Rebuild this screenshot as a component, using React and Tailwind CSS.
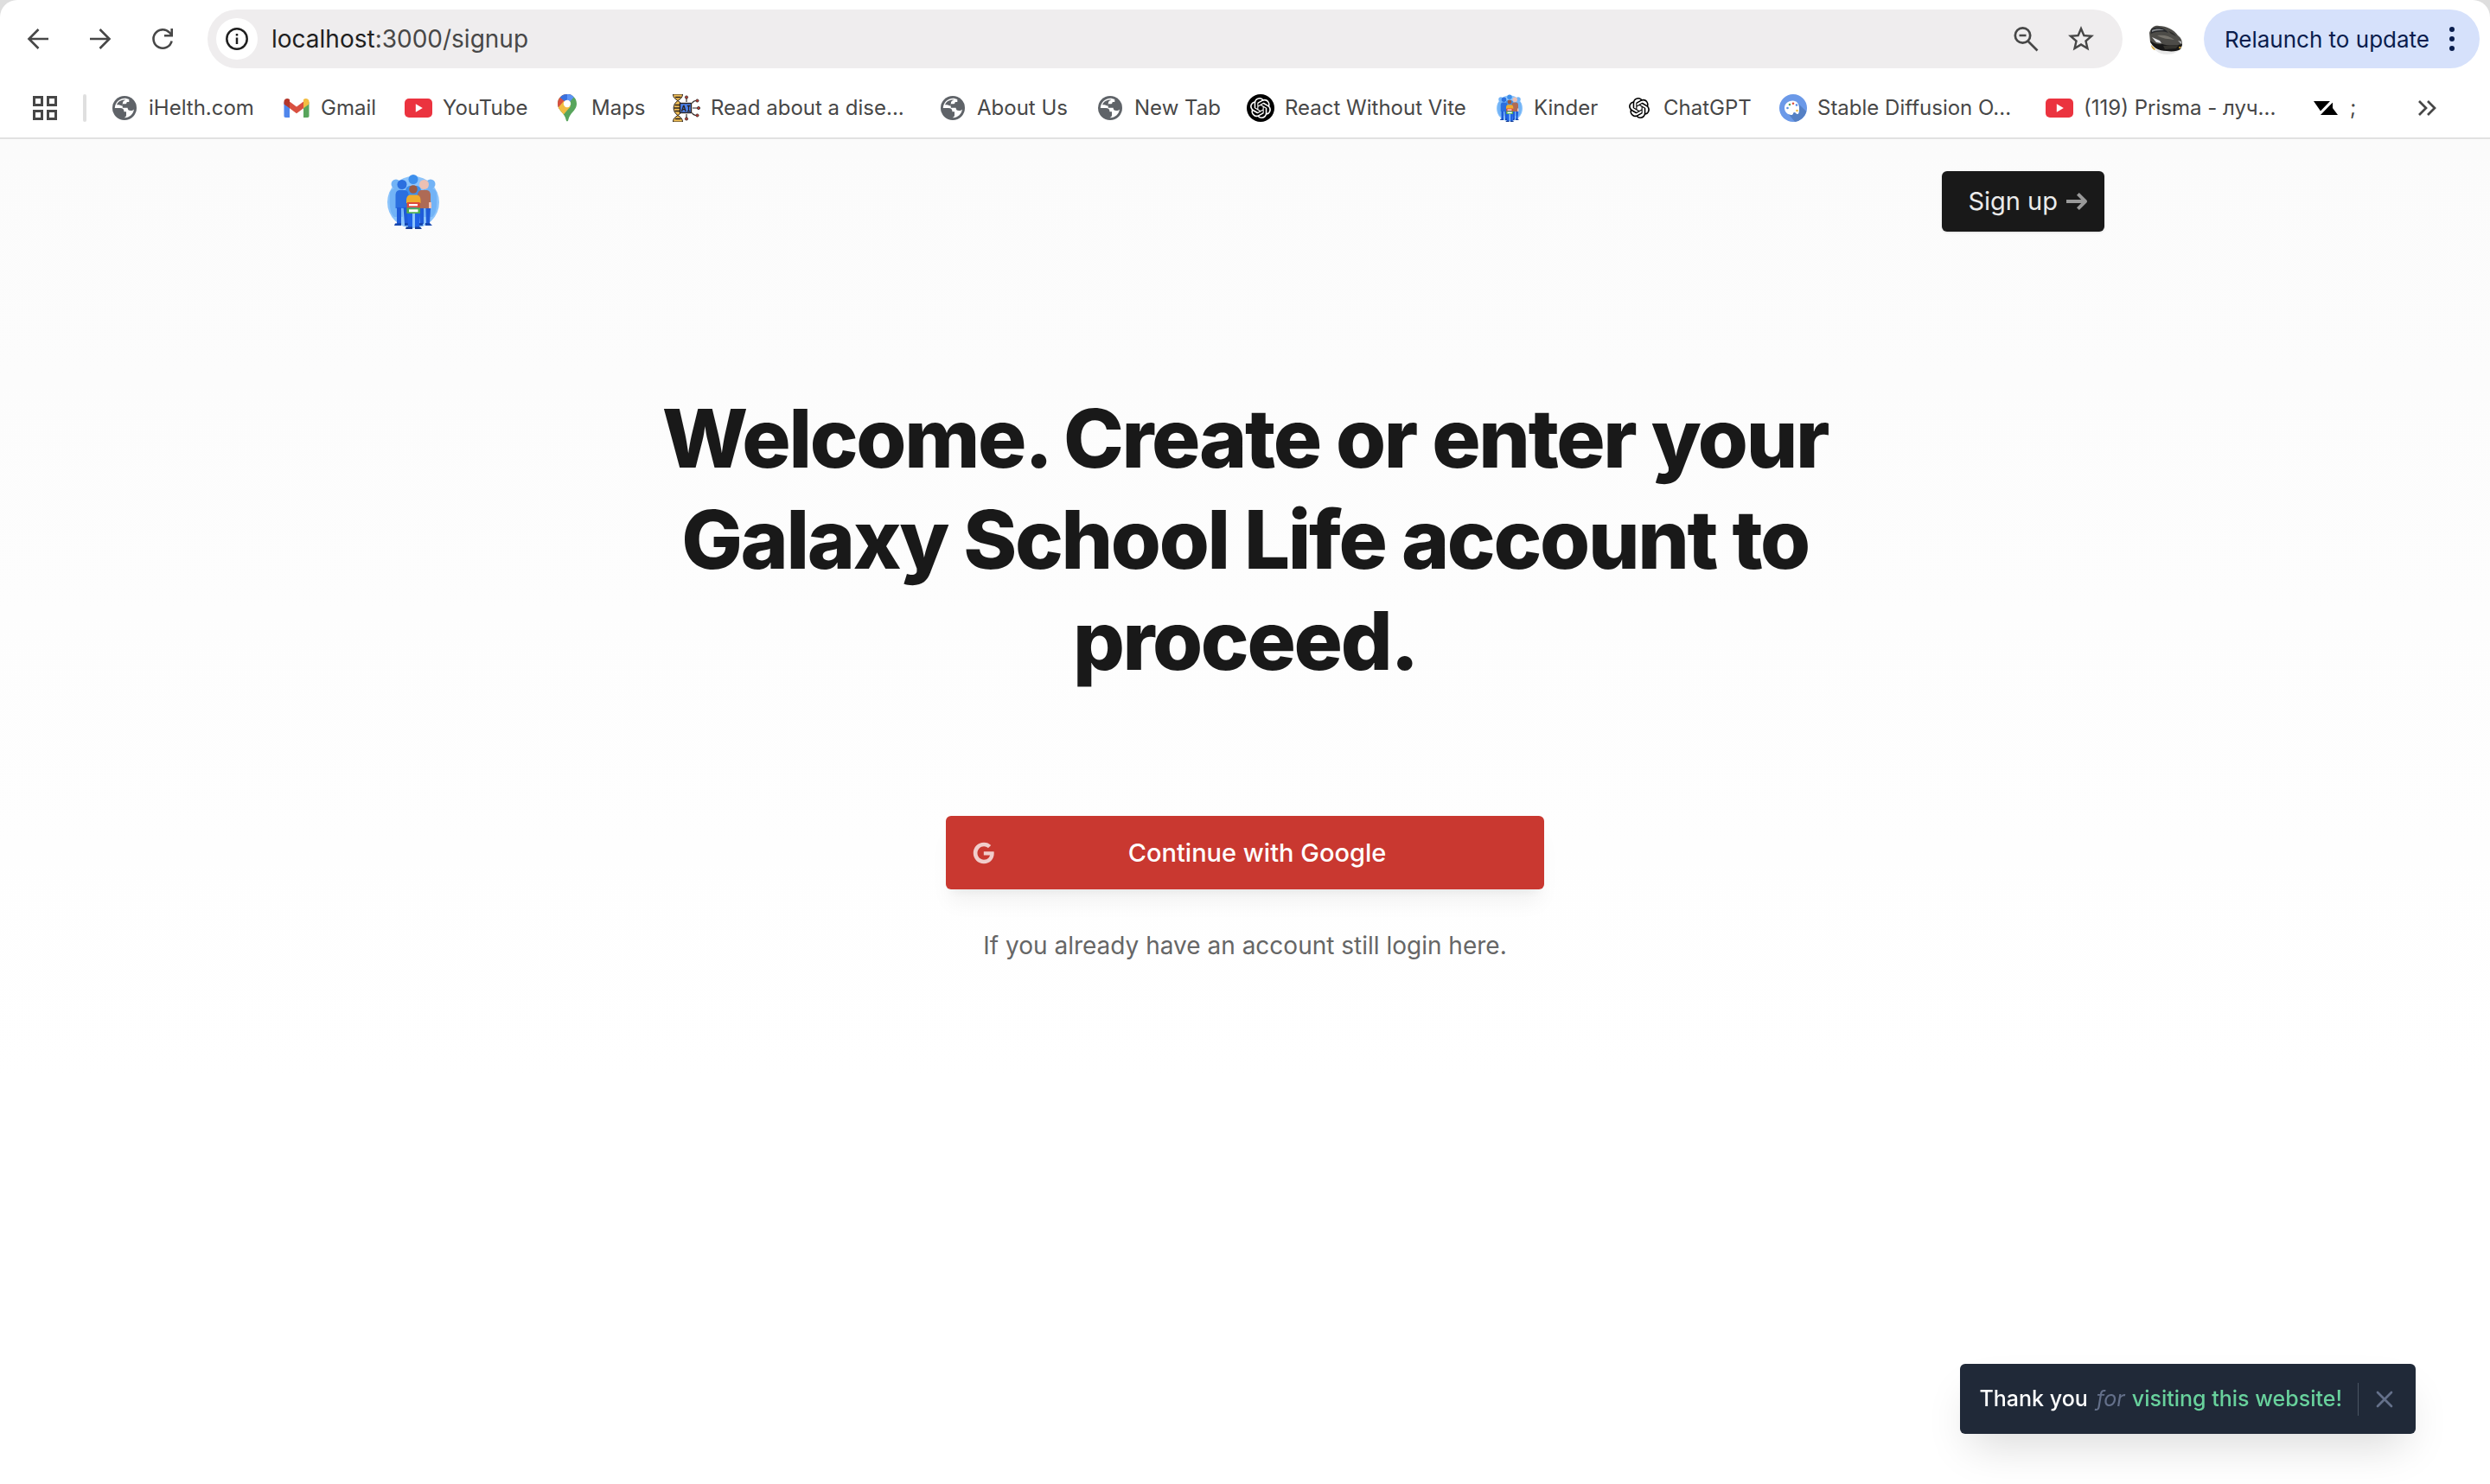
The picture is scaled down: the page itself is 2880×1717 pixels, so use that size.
import { SiOpenai } from "react-icons/si";
import { MdStarBorder } from "react-icons/md";

const BackIcon = ({ className }) => (
  <svg viewBox="0 0 32 32" className={className} fill="none" stroke="currentColor" strokeWidth="2.6">
    <path d="M28 16H5.5M16.5 5 5.5 16l11 11" />
  </svg>
);

const ReloadIcon = () => (
  <svg viewBox="0 0 32 32" className="size-8" fill="none" stroke="currentColor" strokeWidth="2.6">
    <path d="M26.6 18.5A10.7 10.7 0 1 1 24 8.7l2 2" />
    <path d="M26.7 4v8.3H18" />
  </svg>
);

const GlobeIcon = () => (
  <svg viewBox="0 0 32 32" className="size-8">
    <circle cx="16" cy="16" r="14" fill="#5f6368" />
    <path
      d="M17.500 4.800C10.500 4.200 5 9.500 4.800 16H11c3 0 4.500 1.500 4.500 4.300H18v3.900c0 1.400-1 2.500-2.600 2.900 6 .4 10.600-3.700 11.600-9.600-1 1-2.300 1.500-3.800 1.500-2.500 0-3.600-1.300-3.600-3.300h-5.800v-4.500h2.600c1.500 0 2.300-.8 2.300-2.300h2.600V6z"
      fill="#fff"
    />
    <path d="M7 12.300c2.600-.2 4.800.5 6.800 1.700v-3c0-2.500 1.300-3.900 3.700-4.200-4.500-.9-8.700 1.400-10.500 5.500z" fill="#5f6368" />
  </svg>
);

const GmailIcon = () => (
  <svg viewBox="0 0 32 32" className="size-8">
    <path d="M1.500 9v15.500A2.200 2.200 0 0 0 3.700 27H8V13z" fill="#4f86ec" />
    <path d="M30.500 9v15.500a2.200 2.200 0 0 1-2.200 2.500H24V13z" fill="#58a55c" />
    <path d="M8 8.500 16 14.600l8-6.100v7.700l-8 6-8-6z" fill="#d95040" />
    <path d="M1.500 8.600C1.500 5.200 5.400 4 8 6v10.200l-6.500-4.700z" fill="#b3362b" />
    <path d="M30.500 8.600C30.500 5.200 26.600 4 24 6v10.200l6.500-4.700z" fill="#f2bd42" />
  </svg>
);

const YouTubeIcon = () => (
  <svg viewBox="0 0 32 32" className="size-8">
    <rect x="0" y="5" width="32" height="22" rx="5" fill="#eb333f" />
    <path d="M12.800 11.300v9.400l8-4.700z" fill="#fff" />
  </svg>
);

const MapsIcon = () => (
  <svg viewBox="0 0 32 32" className="size-8">
    <defs>
      <clipPath id="map-pin">
        <path d="M16 0C9.900 0 5 4.800 5 10.900c0 5.200 3.300 7.800 6.200 11.600 2 2.700 3 5 3.600 7.800.3 1.500 2.100 1.500 2.400 0 .6-2.800 1.600-5.100 3.600-7.800C23.700 18.700 27 16.100 27 10.900 27 4.800 22.100 0 16 0z" />
      </clipPath>
    </defs>
    <g clipPath="url(#map-pin)">
      <path d="M0 0h32v32H0z" fill="#58a55c" />
      <path d="M0 24 22 0H0z" fill="#d95040" />
      <path d="M7.500 3.500 14 9 24-2H8z" fill="#3871e0" />
      <path d="M16 0h8.500l-.8 3.600-7.700 8.400z" fill="#5c93f5" />
      <path d="m3 18.500 9-10.500 8 6L8 28z" fill="#f2bd42" />
    </g>
    <circle cx="16" cy="11" r="4.200" fill="#fff" />
  </svg>
);

const DnaIcon = () => (
  <svg viewBox="0 0 32 32" className="size-8" fill="none" stroke="#2b2320" strokeWidth="1">
    <path d="M.5 0h11C11.500 4 9 5.500 6 7.500 3 5.500.5 4 .5 0zM.5 32h11c0-4-2.500-5.500-5.500-7.500-3 2-5.500 3.500-5.500 7.500z" fill="#eebd55" />
    <path d="M6 7.500c-6.500 4-6.500 13 0 17 1.500-1 3-2 3.500-3.500v-10C9 9.500 7.500 8.500 6 7.500z" fill="#eebd55" />
    <path d="M3 3.500h6.500M3 28.500h6.500M2.500 12.500H8M1.500 16H8M2.500 19.500H8" strokeWidth="1.300" />
    <rect x="8.500" y="10.500" width="13" height="11" fill="#4b83ee" strokeWidth="1.400" />
    <path d="m10.500 20 2-6.500h.6l2 6.500m-3.800-2.300h3M18.500 13.500v6M16.800 13.500h3.400M16.800 19.700h3.400" strokeWidth="1.300" />
    <path d="M16 9V4.500M16 23v4.500M23 16h5.500M22.500 10.500c1-2 2.500-3 4.500-3M22.500 21.500c1 2 2.500 3 4.500 3" strokeWidth="1.100" />
    <g fill="#c23b35" strokeWidth=".8">
      <circle cx="16" cy="3.500" r="1.600" />
      <circle cx="16" cy="28.500" r="1.600" />
      <circle cx="28.500" cy="7.500" r="1.600" />
      <circle cx="30" cy="16" r="1.600" />
      <circle cx="28.500" cy="24.500" r="1.600" />
    </g>
  </svg>
);

const PeopleIcon = ({ className }) => (
  <svg viewBox="0 0 64 64" className={className}>
    <circle cx="32" cy="33" r="30" fill="#8cc4fb" />
    <g fill="#72b3f6">
      <circle cx="12" cy="12" r="5.500" />
      <circle cx="52" cy="12" r="5.500" />
      <path d="M5 24c0-5 3-7 7-7h8v33H10C6 46 4 40 5 24zM59 24c0-5-3-7-7-7h-8v33h10c4-4 6-10 5-26z" />
    </g>
    <g fill="#3d8fec">
      <circle cx="32" cy="6.500" r="5.500" />
      <path d="M23 21c0-5 2-7 6-7h6c4 0 6 2 6 7v22H23z" />
    </g>
    <g fill="#2b6fdf">
      <circle cx="19" cy="12.500" r="5.500" />
      <path d="M11.500 25c0-4 2-6 5-6h5c3 0 5 2 5 6v15h-15z" />
    </g>
    <path d="M13 39h5v19h-5zM20.500 39H26v19h-4zM38.500 40H44v18h-4zM46.500 40H52l-1 18h-4z" fill="#1f5bd8" />
    <circle cx="44.500" cy="12.500" r="5.500" fill="#ecc0b3" />
    <path d="M37 25c0-4 2-6 5-6h5c3 0 5 2 5 6v15H37z" fill="#ae6a55" />
    <path d="M50 33h3v7h-3z" fill="#f3c3b5" />
    <path d="m11 57.500 7-.5v3h-8zM46 57h5l3 3h-8zM22 57h4v3h-4zM39 57h4v3h-4z" fill="#1748b0" />
    <path d="M25 46h6v16h-5zM34 46h6l-1 16h-5z" fill="#1f63e6" />
    <path d="M24 61.500h7V64h-8zM34 61.500h6L42 64h-8z" fill="#183e93" />
    <path d="M24.500 31h3v14h-3zM37 31h3v14h-3z" fill="#a5604b" />
    <circle cx="32" cy="18" r="4.800" fill="#9b5a43" />
    <path d="M24 31c0-4.500 2-6.500 5-6.500h6c3.500 0 5.500 2 5.500 6.500v3H24z" fill="#f0ac2c" />
    <path d="M25 33h14.500v6H25z" fill="#dc4a3a" />
    <path d="M27 35h10v2.300H27z" fill="#fff" />
    <path d="M24.500 39.500H40v6.500H24.500z" fill="#4bae50" />
    <path d="M27 41.300h10.500v3H27z" fill="#fff" />
  </svg>
);

const PaletteIcon = () => (
  <svg viewBox="0 0 32 32" className="size-8">
    <circle cx="16" cy="16" r="16" fill="#6b99e8" />
    <path d="m22 11 9.300 9A16 16 0 0 1 18 31.900L9 21z" fill="#5580c4" />
    <path d="M15.500 7.500c-5.500 0-9.500 3.800-9.500 8.300 0 5 4 8.200 8 8.200 2.500 0 1.500-2.500 3-3 2-.6 2.500 2.800 4.500 2 1.500-.8 1.500-3.500 1.500-7 0-5-3-8.500-7.500-8.500z" fill="#fff" />
    <circle cx="12" cy="12" r="1.300" fill="#58a55c" />
    <circle cx="16" cy="10.800" r="1.300" fill="#d95040" />
    <circle cx="20" cy="12.500" r="1.300" fill="#4f86ec" />
    <circle cx="9.500" cy="16" r="1.300" fill="#5b8fe0" />
    <circle cx="20.500" cy="19" r="1.300" fill="#f2bd42" />
  </svg>
);

const SlashIcon = () => (
  <svg viewBox="0 0 32 32" className="size-8">
    <path d="M2 8h19L10 19.500zM24 9.500V16l6 8H9.500z" fill="#000" />
    <path d="M25 6.500 6 26.500" stroke="#fff" strokeWidth="2.200" />
  </svg>
);

const CarIcon = () => (
  <svg viewBox="0 0 40 40" className="size-10">
    <path d="M3 24c1 8 9 14 18 14 8 0 14-3 17-9z" fill="#e9e9e9" />
    <path d="M1 13C3 6 8 4 12 5c9 0 17 4 22 11 4 3 5 6 5 11-1 4-4 6-8 6-12 1-23-2-29-9z" fill="#4d4c48" />
    <path d="M3 9c6-4 15-3 20 4-6-2-13-2-20 1z" fill="#26282b" />
    <path d="M4 10c4-2 10-2 14 0-5 0-10 0-14 2z" fill="#8b8e91" />
    <path d="M23 11c4 1 7 3 9 6l-6-3z" fill="#2d2c2a" />
    <path d="M10 16c7-1 14 0 20 5-7-1-14-1-20-5z" fill="#76736c" />
    <path d="m4 18 9 4 2 3-6-1z" fill="#e3e5e8" />
    <path d="m34 22 4 1v3z" fill="#b9bbbe" />
    <path d="M2 22c5 4 9 5 14 4 7 2 15 2 23 0l-2 6c-3 2-9 3-16 2C12 34 4 30 2 22z" fill="#171717" />
    <path d="m17 28 18-1-3 4-13 1z" fill="#35342f" />
    <path d="m3 27 5 5-1 1c-2-1-4-3-4-6zM35 29h3l-2 3z" fill="#d6a93c" />
  </svg>
);

const bookmarks = [
  { icon: <GlobeIcon />, label: "iHelth.com", width: "w-[199px]" },
  { icon: <GmailIcon />, label: "Gmail", width: "w-[141px]" },
  { icon: <YouTubeIcon />, label: "YouTube", width: "w-[172px]" },
  { icon: <MapsIcon />, label: "Maps", width: "w-[138px]" },
  { icon: <DnaIcon />, label: "Read about a dise...", width: "w-[308px]" },
  { icon: <GlobeIcon />, label: "About Us", width: "w-[182px]" },
  { icon: <GlobeIcon />, label: "New Tab", width: "w-[174px]" },
  {
    icon: (
      <span className="flex size-8 items-center justify-center rounded-full bg-black text-white">
        <SiOpenai className="size-6" />
      </span>
    ),
    label: "React Without Vite",
    width: "w-[288px]",
  },
  { icon: <PeopleIcon className="size-8" />, label: "Kinder", width: "w-[150px]" },
  {
    icon: (
      <span className="flex size-8 items-center justify-center text-black">
        <SiOpenai className="size-6" />
      </span>
    ),
    label: "ChatGPT",
    width: "w-[178px]",
  },
  { icon: <PaletteIcon />, label: "Stable Diffusion O...", width: "w-[308px]" },
  { icon: <YouTubeIcon />, label: "(119) Prisma - луч...", width: "w-[308px]" },
  { icon: <SlashIcon />, label: ";", width: "w-[60px]" },
];

function BrowserBar() {
  return (
    <div className="bg-[#dedede]">
      <div className="rounded-t-[20px] border-b-2 border-[#e1e1e1] bg-white text-[#474747]">
        <div className="flex h-[90px] items-center pl-7 pr-3">
          <div className="flex gap-10">
            <button aria-label="Back"><BackIcon className="size-8" /></button>
            <button aria-label="Forward"><BackIcon className="size-8 rotate-180" /></button>
            <button aria-label="Reload"><ReloadIcon /></button>
          </div>
          <div className="ml-9 flex h-[68px] flex-1 items-center rounded-full bg-[#efedee] pl-[10px] pr-[30px]">
            <button aria-label="View site information" className="flex size-12 items-center justify-center rounded-full bg-white text-[#1f1f1f]">
              <svg viewBox="0 0 26 26" className="size-[26px]" fill="none" stroke="currentColor" strokeWidth="2.500">
                <circle cx="13" cy="13" r="11.700" />
                <path d="M13 11.500v7.500M13 7v2.500" />
              </svg>
            </button>
            <p className="ml-4 flex-1 text-[28px]">
              <span className="text-[#1f1f1f]">localhost</span>:3000/signup
            </p>
            <button aria-label="Zoom">
              <svg viewBox="0 0 32 32" className="size-8" fill="none" stroke="currentColor" strokeWidth="2.700">
                <circle cx="12.500" cy="12" r="8.700" />
                <path d="m18.500 18.500 11 11M8.500 12h8" />
              </svg>
            </button>
            <button aria-label="Bookmark this page" className="ml-[30px]"><MdStarBorder className="size-9" /></button>
          </div>
          <button aria-label="Profile" className="ml-[30px]"><CarIcon /></button>
          <button className="ml-6 flex h-[68px] items-center gap-[22px] rounded-full bg-[#d6e1fb] pl-6 pr-7 text-[26px] text-[#0a1d4d]">
            Relaunch to update
            <svg viewBox="0 0 8 30" className="h-[30px] w-2" fill="currentColor">
              <circle cx="4" cy="4" r="3" />
              <circle cx="4" cy="15" r="3" />
              <circle cx="4" cy="26" r="3" />
            </svg>
          </button>
        </div>
        <div className="flex h-[69px] items-center pl-9 pr-14 text-[24px]">
          <button aria-label="Apps">
            <svg viewBox="0 0 32 32" className="size-8" fill="none" stroke="currentColor" strokeWidth="3">
              <path d="M3.500 3.500h9v9h-9zM19.500 3.500h9v9h-9zM3.500 19.500h9v9h-9zM19.500 19.500h9v9h-9z" />
            </svg>
          </button>
          <div className="mx-7 h-8 w-1 rounded-full bg-[#dfdfdf]" />
          <nav className="flex flex-1">
            {bookmarks.map(({ icon, label, width }) => (
              <a key={label} href="#" className={`flex shrink-0 items-center gap-3 whitespace-nowrap ${width}`}>
                <span className="shrink-0">{icon}</span>
                {label}
              </a>
            ))}
          </nav>
          <button aria-label="More bookmarks">
            <svg viewBox="0 0 32 32" className="size-8" fill="none" stroke="currentColor" strokeWidth="2.700">
              <path d="m6 8 8 8-8 8M16 8l8 8-8 8" />
            </svg>
          </button>
        </div>
      </div>
    </div>
  );
}

export default function App() {
  return (
    <div className="flex min-h-screen flex-col bg-white font-['Inter',sans-serif] text-[#191919]">
      <BrowserBar />
      <div className="flex-1 bg-linear-to-b from-[#fbfbfb] to-white to-70%">
        <header className="mx-auto flex h-36 w-full max-w-[1988px] items-center justify-between">
          <a href="#" aria-label="Home"><PeopleIcon className="size-16" /></a>
          <button className="flex h-[70px] items-center gap-[10px] rounded-md bg-[#191919] pl-[30px] pr-5 text-[29px] text-[#ebebeb] shadow-sm">
            Sign up
            <svg viewBox="0 0 12 12" className="size-6 fill-[#999]">
              <path d="M11.700 5.300 7.400 1 6 2.400 8.600 5H0v2h8.600L6 9.600 7.400 11l4.300-4.300c.4-.4.4-1 0-1.400z" />
            </svg>
          </button>
        </header>
        <main className="mx-auto max-w-[1382px] pt-36">
          <h1 className="pb-36 text-center text-[94px] leading-[117px] font-extrabold tracking-tight">
            Welcome. Create or enter your Galaxy School Life account to proceed.
          </h1>
          <div className="mx-auto max-w-[692px]">
            <button className="flex h-[85px] w-full items-center rounded-md bg-[#c93830] px-[30px] text-[29px] font-medium text-white shadow-xl shadow-black/5">
              <svg viewBox="0 0 16 16" className="size-7 fill-white opacity-75">
                <path d="M7.900 7v2.400H12c-.2 1-1.200 3-4 3-2.400 0-4.300-2-4.300-4.400 0-2.400 2-4.400 4.300-4.400 1.400 0 2.300.6 2.800 1.100l1.900-1.800C11.500 1.700 9.900 1 8 1 4.100 1 1 4.100 1 8s3.100 7 7 7c4 0 6.700-2.800 6.700-6.800 0-.5 0-.8-.1-1.200H7.900z" />
              </svg>
              <span className="flex-1 text-center">Continue with Google</span>
            </button>
            <p className="mt-11 text-center text-[28px] leading-[43px] whitespace-nowrap text-[#666]">
              If you already have an account still login here.
            </p>
          </div>
        </main>
      </div>
      <div role="status" className="fixed right-[86px] bottom-[58px] flex h-[81px] items-center rounded-md bg-[#202938] px-[22px] text-[25px] font-medium text-white shadow-2xl shadow-black/15">
        <span>Thank you</span>
        <em className="ml-[10px] font-normal text-[#64708a]">for</em>
        <a href="#" className="ml-2 text-[#68d19c]">visiting this website!</a>
        <span className="mr-5 ml-[18px] h-[38px] w-px bg-[#4b5563]" />
        <button aria-label="Close" className="mr-1">
          <svg viewBox="0 0 20 20" className="size-5" fill="none" stroke="#64708a" strokeWidth="2.700" strokeLinecap="round">
            <path d="m2 2 16 16M18 2 2 18" />
          </svg>
        </button>
      </div>
    </div>
  );
}
